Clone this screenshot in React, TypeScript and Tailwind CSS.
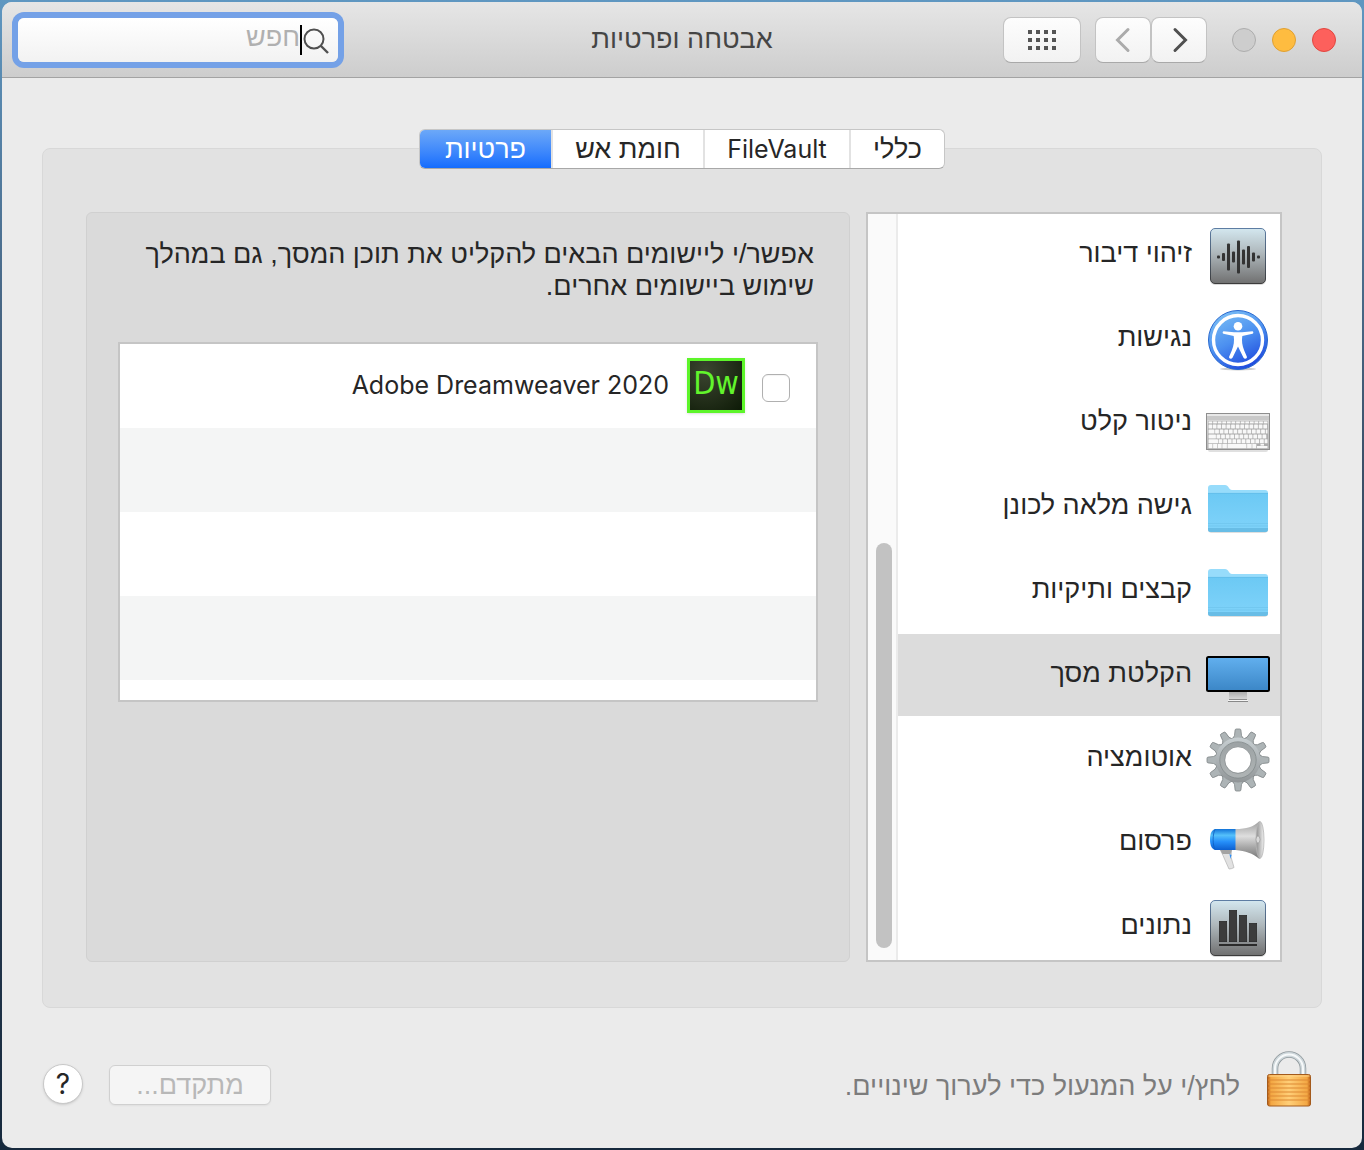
import { useState } from "react";
import type { ReactNode } from "react";

const TABS = ["כללי", "FileVault", "חומת אש", "פרטיות"];
const TAB_WIDTHS = ["w-[95px]", "w-[146px]", "w-[152px]", "w-[131px]"];

function SpeechIcon() {
  const bars = [
    [9, 3], [14, 8], [19, 27], [24, 11], [29, 33], [34, 15], [39, 22], [44, 9], [49, 3],
  ];
  return (
    <svg viewBox="0 0 64 64" className="size-16">
      <defs>
        <linearGradient id="tile" x1="0" y1="0" x2="0" y2="1">
          <stop offset="0" stopColor="#d3e7ef" />
          <stop offset="0.45" stopColor="#aeb7bb" />
          <stop offset="1" stopColor="#707070" />
        </linearGradient>
        <linearGradient id="tileEdge" x1="0" y1="0" x2="0" y2="1">
          <stop offset="0" stopColor="#5d7da3" />
          <stop offset="1" stopColor="#3c3c3c" />
        </linearGradient>
      </defs>
      <rect x="4" y="5" width="56" height="56" rx="5" fill="#000" opacity="0.15" />
      <rect x="4.5" y="4.5" width="55" height="55" rx="4.5" fill="url(#tile)" stroke="url(#tileEdge)" />
      {bars.map(([x, h]) => (
        <rect key={x} x={x + 2} y={33 - h / 2} width="3" height={h} rx="1" fill="#333" />
      ))}
    </svg>
  );
}

function AccessibilityIcon() {
  return (
    <svg viewBox="0 0 64 64" className="size-16">
      <defs>
        <linearGradient id="access" x1="0.2" y1="0" x2="0.7" y2="1">
          <stop offset="0" stopColor="#7cc0f5" />
          <stop offset="0.5" stopColor="#4c90f0" />
          <stop offset="1" stopColor="#1b45dc" />
        </linearGradient>
      </defs>
      <ellipse cx="32" cy="61" rx="18" ry="1.5" fill="#000" opacity="0.2" />
      <circle cx="32" cy="32" r="29.5" fill="url(#access)" stroke="#2868cf" />
      <circle cx="32" cy="32" r="24.5" fill="none" stroke="#fff" strokeWidth="3.4" />
      <circle cx="32" cy="18.3" r="4.3" fill="#fff" />
      <path
        d="M17.5 23.3c-1 .1-1.3 2.2 0 2.5l10.2 2.1c.8 4.8.1 9.5-1.9 14.5l-2.7 6.4c-.5 1.8 2.3 2.8 3.4 1L32 38.5l5.5 11.3c1.1 1.8 3.9.8 3.4-1l-2.7-6.4c-2-5-2.7-9.7-1.9-14.5l10.2-2.1c1.3-.3 1-2.4 0-2.5L36 24.2h-8z"
        fill="#fff"
      />
    </svg>
  );
}

function KeyboardIcon() {
  // [y, first key width, key count]
  const rows = [
    [32.5, 3.6, 12],
    [37.5, 6, 11],
    [42.5, 7.4, 11],
    [47.2, 9.5, 10],
  ];
  const step = 4.6;
  return (
    <svg viewBox="0 0 64 64" className="size-16">
      <defs>
        <linearGradient id="keys" x1="0" y1="0" x2="0" y2="1">
          <stop offset="0" stopColor="#dedede" />
          <stop offset="1" stopColor="#b4b4b4" />
        </linearGradient>
      </defs>
      <rect x="2" y="55" width="60" height="5" rx="2" fill="#000" opacity="0.12" />
      <rect x="0.5" y="21.5" width="63" height="36" fill="url(#keys)" stroke="#8e8e8e" />
      <rect x="1" y="22" width="62" height="2" fill="#e8e8e8" />
      <rect x="1" y="24" width="62" height="4" fill="#c9c9c9" />
      <rect x="2" y="29" width="60" height="27.5" fill="#adadad" />
      {[0, 1, 2, 3, 4, 5, 6, 7, 8, 9, 10, 11, 12].map((c) => (
        <rect key={c} x={2.5 + c * step} y="29.4" width="3.8" height="2" fill="#fafafa" />
      ))}
      {rows.map(([y, first, count]) => {
        const end = 2.5 + first + 0.6 + count * step;
        return (
          <g key={y} fill="#f8f8f8">
            <rect x="2.5" y={y} width={first} height="4.1" rx="0.5" />
            {Array.from({ length: count }, (_, c) => (
              <rect key={c} x={3.1 + first + c * step} y={y} width="3.8" height="4.1" rx="0.5" />
            ))}
            {end < 60 && <rect x={end} y={y} width={61.5 - end} height="4.1" rx="0.5" />}
          </g>
        );
      })}
      <g fill="#f8f8f8">
        <rect x="2.5" y="51.9" width="4" height="4.3" />
        <rect x="7.1" y="51.9" width="4" height="4.3" />
        <rect x="11.7" y="51.9" width="4" height="4.3" />
        <rect x="16.3" y="51.9" width="4.6" height="4.3" />
        <rect x="21.5" y="51.9" width="19" height="4.3" />
        <rect x="41.1" y="51.9" width="4.6" height="4.3" />
        <rect x="46.3" y="51.9" width="4" height="4.3" />
        <rect x="51" y="54" width="10.5" height="2.2" />
        <rect x="54.5" y="51.9" width="3.5" height="1.7" />
      </g>
    </svg>
  );
}

function FolderIcon() {
  return (
    <svg viewBox="0 0 64 64" className="size-16">
      <defs>
        <linearGradient id="folder" x1="0" y1="0" x2="0" y2="1">
          <stop offset="0" stopColor="#6cc9f4" />
          <stop offset="1" stopColor="#80d3fa" />
        </linearGradient>
      </defs>
      <path d="M2 40h60v13.500a3 3 0 0 1-3 3H5a3 3 0 0 1-3-3z" fill="#000" opacity="0.25" />
      <path d="M2 12a3 3 0 0 1 3-3h14c3.500 0 4 5 7 5h33a3 3 0 0 1 3 3v20H2z" fill="#97dcfb" />
      <path d="M2 17h60v36a3 3 0 0 1-3 3H5a3 3 0 0 1-3-3z" fill="url(#folder)" />
      <path d="M2 17.4h60" stroke="#62bde8" strokeWidth="0.8" />
      <path d="M2 47.5h60M2 50h60" stroke="#70c5ed" strokeWidth="0.8" />
      <path d="M2 52h60v1a3 3 0 0 1-3 3H5a3 3 0 0 1-3-3z" fill="#68bde6" />
    </svg>
  );
}

function ScreenIcon() {
  return (
    <svg viewBox="0 0 64 64" className="size-16">
      <defs>
        <linearGradient id="screen" x1="0" y1="0" x2="0" y2="1">
          <stop offset="0" stopColor="#62b0ef" />
          <stop offset="1" stopColor="#3b86c6" />
        </linearGradient>
        <linearGradient id="stand" x1="0" y1="0" x2="0" y2="1">
          <stop offset="0" stopColor="#a5a5a5" />
          <stop offset="1" stopColor="#d5d5d5" />
        </linearGradient>
      </defs>
      <rect x="23" y="47" width="18" height="8" fill="url(#stand)" />
      <path d="M23 55.500h18" stroke="#8a8a8a" />
      <path d="M22 56.500h20" stroke="#f4f4f4" />
      <path d="M22 57.500h20" stroke="#888" />
      <rect x="1" y="13" width="62" height="34" rx="1.5" fill="url(#screen)" stroke="#000" strokeWidth="2" />
    </svg>
  );
}

function GearIcon() {
  const teeth = [0, 30, 60, 90, 120, 150, 180, 210, 240, 270, 300, 330];
  return (
    <svg viewBox="0 0 64 64" className="size-16">
      <defs>
        <linearGradient id="gear" gradientUnits="userSpaceOnUse" x1="0" y1="0" x2="0" y2="64">
          <stop offset="0" stopColor="#d3dbde" />
          <stop offset="1" stopColor="#85898b" />
        </linearGradient>
        <linearGradient id="gearRing" x1="0" y1="0" x2="0" y2="1">
          <stop offset="0" stopColor="#9da3a5" />
          <stop offset="1" stopColor="#aeb3b4" />
        </linearGradient>
        <mask id="gearHole">
          <rect width="64" height="64" fill="#fff" />
          <circle cx="32" cy="32" r="13" fill="#000" />
        </mask>
      </defs>
      <g mask="url(#gearHole)">
        <circle cx="32" cy="32" r="23" fill="#7f8587" />
        {teeth.map((a) => (
          <path
            key={a}
            d="M26.500 11l2-3.500.6-5.500q.2-1 1.200-1h3.400q1 0 1.200 1l.6 5.500 2 3.500z"
            transform={`rotate(${a} 32 32)`}
            fill="#adb4b6"
            stroke="#7f8587"
            strokeWidth="0.8"
          />
        ))}
        <circle cx="32" cy="32" r="22.4" fill="url(#gear)" />
        <circle cx="32" cy="32" r="15.8" fill="none" stroke="url(#gearRing)" strokeWidth="4.600" />
        <circle cx="32" cy="32" r="18.2" fill="none" stroke="#838a8c" strokeWidth="0.8" />
      </g>
      <circle cx="32" cy="32" r="13.3" fill="none" stroke="#8b9092" strokeWidth="0.8" />
    </svg>
  );
}

function MegaphoneIcon() {
  return (
    <svg viewBox="0 0 64 64" className="size-16">
      <defs>
        <linearGradient id="barrel" x1="0" y1="0" x2="0" y2="1">
          <stop offset="0" stopColor="#1273d8" />
          <stop offset="0.3" stopColor="#55c1fb" />
          <stop offset="0.6" stopColor="#2690fa" />
          <stop offset="1" stopColor="#0c5fd0" />
        </linearGradient>
        <linearGradient id="horn" x1="0" y1="0" x2="0" y2="1">
          <stop offset="0" stopColor="#9b9b9b" />
          <stop offset="0.4" stopColor="#dedede" />
          <stop offset="0.7" stopColor="#a5a5a5" />
          <stop offset="1" stopColor="#777" />
        </linearGradient>
        <linearGradient id="mouth" x1="0" y1="0" x2="1" y2="0">
          <stop offset="0" stopColor="#8c8c8c" />
          <stop offset="1" stopColor="#f2f2f2" />
        </linearGradient>
      </defs>
      <path d="M14.500 38h11l-.5 7 3 10.500q-2.500 1.500-5 1.500l-6-13.500z" fill="#e2e2e2" stroke="#b9b9b9" strokeWidth="0.8" />
      <path d="M14 37.500h12l-1.500 4.500h-8z" fill="#a3a3a3" />
      <path d="M23.500 42l2 1-1 4z" fill="#2b8df5" />
      <path d="M9 17h21v21H9c-3-1-5-4-5-10.500S6 18 9 17z" fill="url(#barrel)" />
      <path d="M9 17.500c-2.500 5-2.500 15 0 20" fill="none" stroke="#0d5dc0" strokeWidth="0.8" />
      <path d="M29.500 17c11 0 18-2 24-8v38c-7-6-14-8-24-9z" fill="url(#horn)" />
      <ellipse cx="54" cy="28" rx="4" ry="18.500" fill="url(#mouth)" stroke="#b5b5b5" strokeWidth="0.8" />
      <ellipse cx="52" cy="27.500" rx="2" ry="3.500" fill="#d9d9d9" stroke="#888" strokeWidth="0.5" />
    </svg>
  );
}

function AnalyticsIcon() {
  return (
    <svg viewBox="0 0 64 64" className="size-16">
      <rect x="4" y="5" width="56" height="56" rx="5" fill="#000" opacity="0.15" />
      <rect x="4.5" y="4.5" width="55" height="55" rx="4.5" fill="url(#tile)" stroke="url(#tileEdge)" />
      <g fill="#3c3c3c" stroke="#2b2b2b" strokeWidth="0.8">
        <rect x="13.4" y="25.4" width="7.2" height="20.2" />
        <rect x="23.4" y="14.4" width="7.2" height="31.2" />
        <rect x="33.4" y="19.4" width="7.2" height="26.2" />
        <rect x="43.4" y="27.4" width="7.2" height="18.2" />
      </g>
      <rect x="13" y="48" width="38" height="2" fill="#2b2b2b" />
    </svg>
  );
}

function LockIcon() {
  const ridges = [30, 34, 38, 42, 46, 50];
  return (
    <svg viewBox="0 0 46 58" className="h-[58px] w-[46px]">
      <defs>
        <linearGradient id="brass" x1="0" y1="0" x2="1" y2="0">
          <stop offset="0" stopColor="#b85a12" />
          <stop offset="0.08" stopColor="#f3a743" />
          <stop offset="0.5" stopColor="#ffcf78" />
          <stop offset="0.92" stopColor="#f3a743" />
          <stop offset="1" stopColor="#b85a12" />
        </linearGradient>
      </defs>
      <path d="M9 25V17.500a14 14 0 0 1 28 0V25" fill="none" stroke="#8f989c" strokeWidth="6.500" />
      <path d="M9 25V17.500a14 14 0 0 1 28 0V25" fill="none" stroke="#cdd6da" strokeWidth="5" />
      <path d="M9 25V17.500a14 14 0 0 1 28 0V25" fill="none" stroke="#f6f9fa" strokeWidth="2" />
      <rect x="1.5" y="23.5" width="43" height="31.5" rx="2" fill="url(#brass)" stroke="#a35a1c" />
      {ridges.map((y) => (
        <path key={y} d={`M2 ${y - 1}h42`} stroke="#dd8a35" strokeWidth="1.2" />
      ))}
      <path d="M2.500 25h41" stroke="#ffd58a" />
    </svg>
  );
}

const ITEMS: { label: string; icon: ReactNode }[] = [
  { label: "זיהוי דיבור", icon: <SpeechIcon /> },
  { label: "נגישות", icon: <AccessibilityIcon /> },
  { label: "ניטור קלט", icon: <KeyboardIcon /> },
  { label: "גישה מלאה לכונן", icon: <FolderIcon /> },
  { label: "קבצים ותיקיות", icon: <FolderIcon /> },
  { label: "הקלטת מסך", icon: <ScreenIcon /> },
  { label: "אוטומציה", icon: <GearIcon /> },
  { label: "פרסום", icon: <MegaphoneIcon /> },
  { label: "נתונים", icon: <AnalyticsIcon /> },
];

const TOOL_BUTTON =
  "flex h-[46px] items-center justify-center rounded-lg border border-[#c3c3c3] border-b-[#a9a9a9] bg-linear-to-b from-[#fdfdfd] to-[#f2f2f2]";

function TitleBar() {
  return (
    <header className="grid h-[76px] grid-cols-[1fr_auto_1fr] items-center border-b border-[#a3a3a3] bg-linear-to-b from-[#e6e6e6] to-[#cdcdcd] px-4">
      <div className="flex items-center pr-[10px]">
        <div className="flex gap-4">
          <button aria-label="סגור" className="size-6 rounded-full border border-[#e2463f] bg-[#fd605c]" />
          <button aria-label="מזער" className="size-6 rounded-full border border-[#e0a032] bg-[#febc40]" />
          <button aria-label="הגדל" className="size-6 rounded-full border border-[#adadad] bg-[#cdcdcd]" />
        </div>
        <button aria-label="הקודם" className={`${TOOL_BUTTON} mr-[25px] w-14`}>
          <svg viewBox="0 0 24 28" className="h-7 w-6">
            <path d="M8 3.500L18.500 14 8 24.500" fill="none" stroke="#505050" strokeWidth="3" strokeLinecap="round" />
          </svg>
        </button>
        <button aria-label="הבא" className={`${TOOL_BUTTON} w-14`} disabled>
          <svg viewBox="0 0 24 28" className="h-7 w-6">
            <path d="M17 3.500L6.500 14 17 24.500" fill="none" stroke="#ababab" strokeWidth="3" strokeLinecap="round" />
          </svg>
        </button>
        <button aria-label="הצג הכל" className={`${TOOL_BUTTON} mr-[14px] w-[78px]`}>
          <svg viewBox="0 0 28 20" className="h-5 w-7" fill="#555">
            {[0, 8, 16].map((y) => [0, 8, 16, 24].map((x) => <rect key={`${x}-${y}`} x={x} y={y} width="4" height="4" />))}
          </svg>
        </button>
      </div>
      <h1 className="text-[27px] text-[#454545]">אבטחה ופרטיות</h1>
      <label className="flex h-11 w-80 items-center justify-self-end rounded-md bg-linear-to-b from-white to-[#f2f2f2] pr-2 ring-[6px] ring-[#74a1e7]">
        <svg viewBox="0 0 28 28" className="size-7 shrink-0">
          <circle cx="12" cy="13" r="9.5" fill="none" stroke="#505050" strokeWidth="2" />
          <path d="M19 20l7 7" stroke="#505050" strokeWidth="2.4" />
        </svg>
        <span className="h-[30px] w-[2px] shrink-0 bg-black" />
        <input
          type="search"
          aria-label="חפש"
          placeholder="חפש"
          className="w-full min-w-0 bg-transparent pb-1 text-[27px] caret-transparent outline-none placeholder:text-[#b0b0b0]"
        />
      </label>
    </header>
  );
}

export default function App() {
  const [tab, setTab] = useState("פרטיות");
  const [selected, setSelected] = useState("הקלטת מסך");

  return (
    <div
      dir="rtl"
      className="flex min-h-screen bg-linear-to-b from-[#5f97c1] via-[#3c5069] via-40% to-[#16293d] p-[2px] font-['Liberation_Sans',Arial,sans-serif] text-[#262626]"
    >
      <div className="flex w-full flex-col overflow-hidden rounded-[10px] bg-[#ebebeb]">
        <TitleBar />

        <main className="flex grow flex-col px-10 pt-[51px]">
          <div role="tablist" className="z-10 -mb-[21px] flex h-10 self-center overflow-hidden rounded-md border border-[#c6c6c6] border-b-[#a8a8a8] bg-white">
            {TABS.map((t, i) => (
              <button
                key={t}
                role="tab"
                aria-selected={t === tab}
                onClick={() => setTab(t)}
                className={`${TAB_WIDTHS[i]} leading-9 ${
                  t === "FileVault" ? "font-['Inter',sans-serif] text-[25px]" : "text-[27px]"
                } ${t === tab ? "bg-linear-to-b from-[#6ca8f8] to-[#136cfd] text-white" : "border-l-2 border-[#e2e2e2]"} ${
                  TABS[i + 1] === tab ? "border-l-0" : ""
                }`}
              >
                {t}
              </button>
            ))}
          </div>

          <section className="flex grow gap-4 rounded-lg border border-[#d8d8d8] bg-[#e2e2e2] pt-[63px] pr-[39px] pb-[45px] pl-[43px]">
            <nav className="flex h-[750px] w-[416px] shrink-0 border-2 border-[#c5c5c5] bg-white">
              <ul className="flex grow flex-col gap-[2px] overflow-hidden">
                {ITEMS.map((item) => (
                  <li key={item.label} className="shrink-0">
                    <button
                      onClick={() => setSelected(item.label)}
                      className={`flex h-[82px] w-full items-center gap-[14px] pt-[2px] pr-[10px] text-right text-[27px] ${
                        item.label === selected ? "bg-[#dcdcdc]" : ""
                      }`}
                    >
                      {item.icon}
                      <span className="pb-[6px]">{item.label}</span>
                    </button>
                  </li>
                ))}
              </ul>
              <div className="flex w-[30px] shrink-0 flex-col items-center justify-end border-r-2 border-[#ebebeb] bg-[#fafafa] pb-3 pl-1">
                <div className="h-[405px] w-4 rounded-full bg-[#c2c2c2]" />
              </div>
            </nav>

            <div className="grow rounded-md border border-[#d0d0d0] bg-[#dadada] px-[31px] pt-[25px]">
              <p className="pr-1 text-[27px] leading-8">
                אפשר/י ליישומים הבאים להקליט את תוכן המסך, גם במהלך
                <br />
                שימוש ביישומים אחרים.
              </p>
              <div className="mt-10 h-[360px] overflow-hidden border-2 border-[#c5c5c5] bg-white">
                <label className="flex h-[84px] items-center pr-[26px]">
                  <input
                    type="checkbox"
                    className="mt-1 size-7 appearance-none rounded-md border border-[#b0b0b0] bg-white inset-shadow-xs checked:bg-[#136cfd]"
                  />
                  <span className="mr-[17px] mb-[2px] flex h-[55px] w-[58px] items-center justify-center border-[3px] border-[#5df52a] bg-radial-[at_30%_20%] from-[#3b4530] to-[#0d1a06] pb-1 font-['DejaVu_Sans_Condensed','DejaVu_Sans',sans-serif] text-[32px] text-[#62f52c] shadow-sm">
                    Dw
                  </span>
                  <span dir="ltr" className="mr-[18px] font-['Inter',sans-serif] text-[25px]">
                    Adobe Dreamweaver 2020
                  </span>
                </label>
                <div className="h-[84px] bg-[#f4f5f5]" />
                <div className="h-[84px]" />
                <div className="h-[84px] bg-[#f4f5f5]" />
              </div>
            </div>
          </section>

          <footer className="flex h-[140px] items-center pt-1">
            <button aria-label="מנעול" className="mr-[10px]">
              <LockIcon />
            </button>
            <p className="mr-[26px] pt-3 text-[27px] text-[#7c7c7c]">לחץ/י על המנעול כדי לערוך שינויים.</p>
            <button
              disabled
              className="mt-[10px] mr-auto h-10 w-[162px] rounded-md border border-[#d0d0d0] bg-[#f5f5f5] text-[27px] leading-9 text-[#b8b8b8] shadow-xs"
            >
              מתקדם...
            </button>
            <button
              aria-label="עזרה"
              className="mt-2 mr-[26px] ml-px size-10 rounded-full border border-[#c8c8c8] bg-white font-['Inter',sans-serif] text-[28px] leading-9 shadow-sm"
            >
              ?
            </button>
          </footer>
        </main>
      </div>
    </div>
  );
}
